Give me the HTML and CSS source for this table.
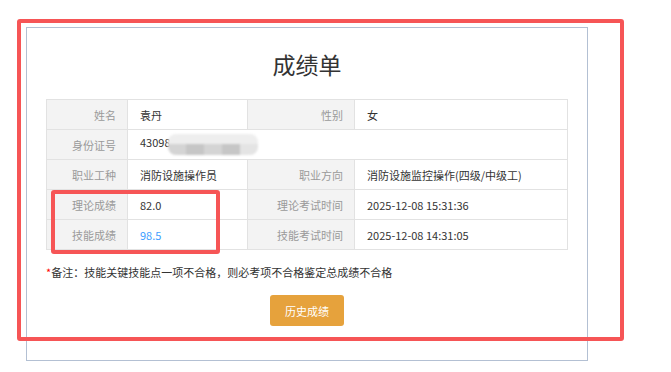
FILE: index.html
```html
<!DOCTYPE html>
<html lang="zh-CN">
<head>
  <meta charset="UTF-8">
  <title>成绩单</title>
  <link rel="stylesheet" href="styles.css">
</head>
<body>

<div class="page">
  <div class="sheet">
    <h1 class="sheet-title">成绩单</h1>

    <table class="score-table">
      <colgroup>
        <col class="col-label-a">
        <col class="col-value-a">
        <col class="col-label-b">
        <col class="col-value-b">
      </colgroup>
      <tr>
        <td class="label">姓名</td>
        <td>袁丹</td>
        <td class="label">性别</td>
        <td>女</td>
      </tr>
      <tr>
        <td class="label">身份证号</td>
        <td colspan="3">43098<span class="mosaic"><i></i><i></i><i></i><i></i><i></i><i></i><i></i><i></i><i></i><i></i></span></td>
      </tr>
      <tr>
        <td class="label">职业工种</td>
        <td>消防设施操作员</td>
        <td class="label">职业方向</td>
        <td>消防设施监控操作(四级/中级工)</td>
      </tr>
      <tr>
        <td class="label">理论成绩</td>
        <td>82.0</td>
        <td class="label">理论考试时间</td>
        <td>2025-12-08 15:31:36</td>
      </tr>
      <tr>
        <td class="label">技能成绩</td>
        <td class="score-link">98.5</td>
        <td class="label">技能考试时间</td>
        <td>2025-12-08 14:31:05</td>
      </tr>
    </table>

    <p class="note"><span class="star">*</span>备注：技能关键技能点一项不合格，则必考项不合格鉴定总成绩不合格</p>

    <div class="actions">
      <button class="btn-history">历史成绩</button>
    </div>
  </div>
</div>

<!-- annotation marks drawn over the screenshot -->
<div class="mark mark-outer"></div>
<div class="mark mark-scores"></div>

</body>
</html>
```

FILE: styles.css
```css
* {
  box-sizing: border-box;
}

body {
  margin: 0;
  background: #fff;
  font-family: "Microsoft YaHei", "Noto Sans CJK SC", sans-serif;
  color: #333;
}

.page {
  padding: 27px 0 0 26px;
}

.sheet {
  width: 562px;
  height: 334px;
  border: 1px solid #b3c0d3;
  padding: 20px 19px 0;
}

.sheet-title {
  margin: 0 0 19px;
  text-align: center;
  font-size: 23px;
  font-weight: normal;
  line-height: 32px;
  color: #333;
}

.score-table {
  width: 521px;
  border-collapse: collapse;
  table-layout: fixed;
  font-size: 11px;
}

.col-label-a { width: 81px; }
.col-value-a { width: 120px; }
.col-label-b { width: 107px; }
.col-value-b { width: 213px; }

.score-table td {
  height: 30px;
  padding: 0 12px;
  border: 1px solid #e2e2e2;
  white-space: nowrap;
  overflow: hidden;
  color: #333;
}

.score-table td.label {
  background: #f3f3f3;
  color: #9a9a9a;
  text-align: right;
  padding: 0 11px 0 0;
}

.score-table td.score-link {
  color: #409eff;
}

.mosaic {
  display: inline-flex;
  flex-wrap: wrap;
  width: 90px;
  height: 21px;
  margin-left: -3px;
  vertical-align: middle;
  filter: blur(1.2px);
  border-radius: 8px;
  overflow: hidden;
}

.mosaic i {
  width: 18px;
  height: 10px;
  background: #eeeeee;
}

.mosaic i:nth-child(n+6) {
  height: 11px;
  background: #d4d4d4;
}

.mosaic i:nth-child(7),
.mosaic i:nth-child(9) {
  background: #c6c6c6;
}

.mosaic i:nth-child(10) {
  background: #e4e4e4;
}

.note {
  margin: 12px 0 0;
  font-size: 11px;
  line-height: 20px;
  color: #333;
}

.star {
  color: #f00;
}

.actions {
  margin-top: 13px;
  text-align: center;
}

.btn-history {
  width: 74px;
  height: 31px;
  border: none;
  border-radius: 3px;
  background: #e6a23c;
  color: #fff;
  font-family: inherit;
  font-size: 11px;
  cursor: pointer;
}

.mark {
  position: absolute;
  border: 4px solid #f65556;
  border-radius: 3px;
  pointer-events: none;
}

.mark-outer {
  left: 17px;
  top: 19px;
  width: 607px;
  height: 322px;
}

.mark-scores {
  left: 51px;
  top: 190px;
  width: 169px;
  height: 64px;
}
```
